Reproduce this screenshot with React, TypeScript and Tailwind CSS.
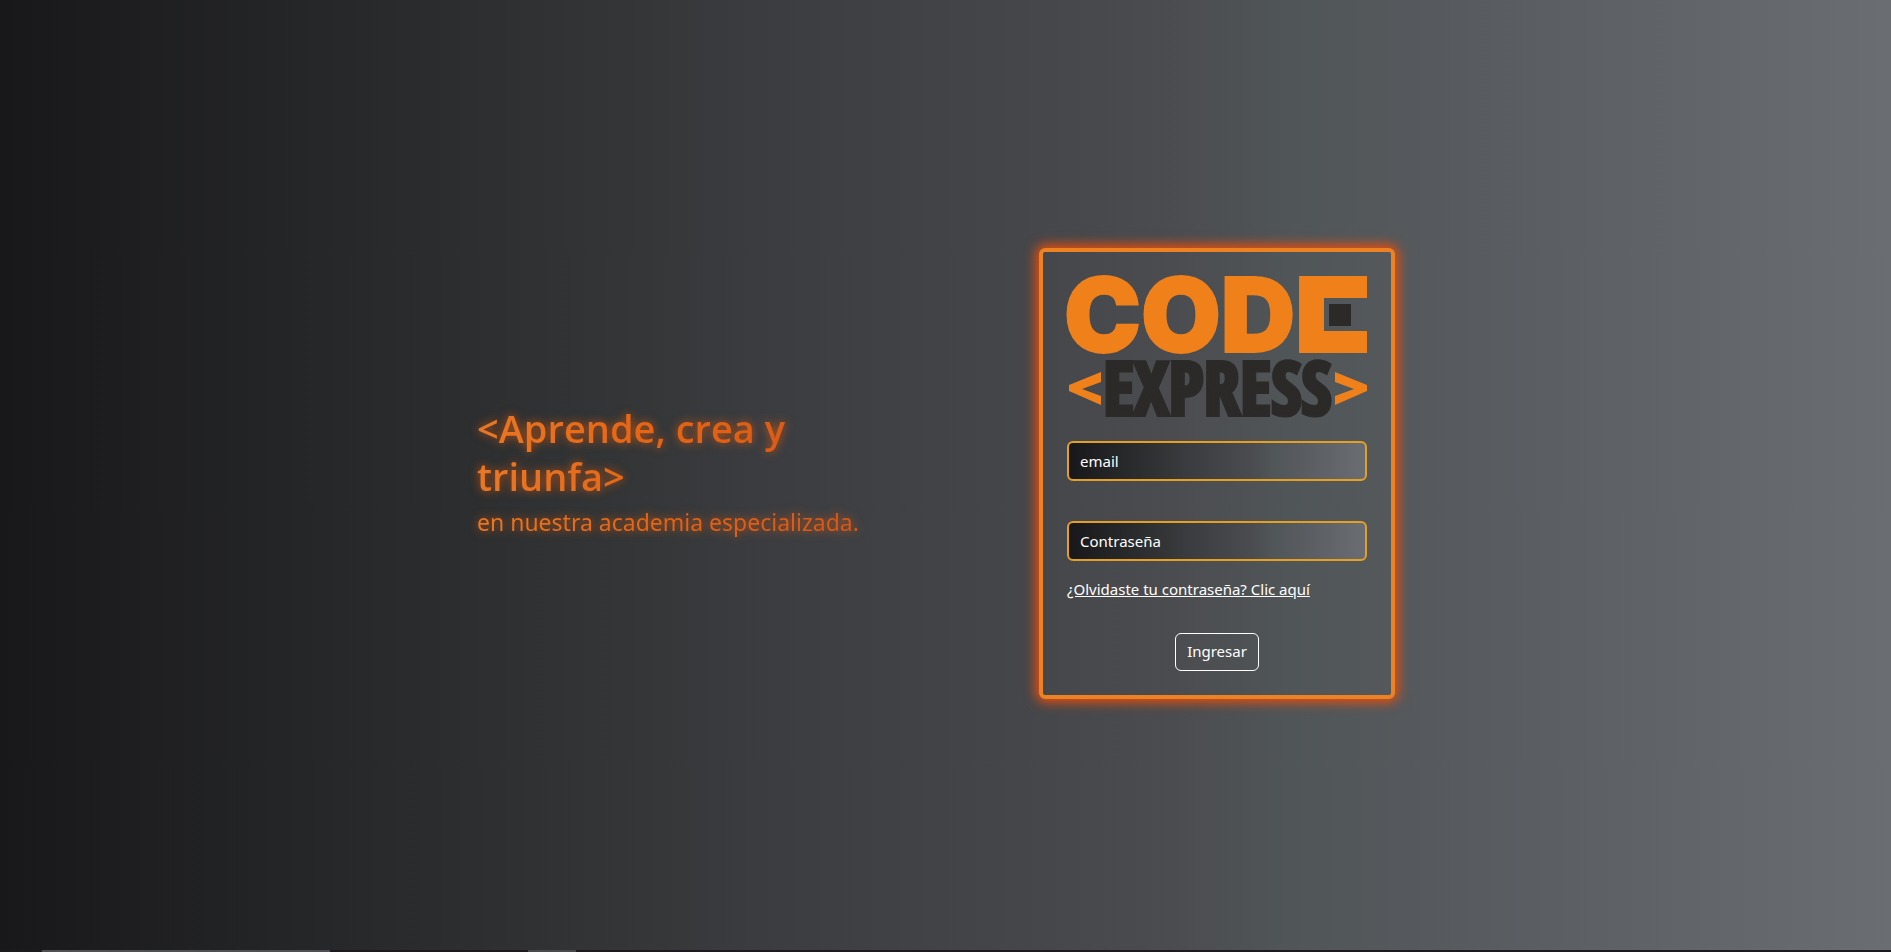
function Logo() {
  return (
    <svg viewBox="0 0 300 141" className="block w-full overflow-visible" role="img" aria-label="Code Express">
      <mask id="open-e" maskUnits="userSpaceOnUse" x="-10" y="-10" width="320" height="100">
        <rect x="-10" y="-10" width="320" height="100" fill="#fff" />
        <rect x="257" y="22" width="52" height="33" fill="#000" />
      </mask>
      <g fill="#f0801a" mask="url(#open-e)">
        <text
          x="-3"
          y="76"
          fontSize="103"
          fontFamily="Inter, sans-serif"
          fontWeight="900"
          stroke="#f0801a"
          strokeWidth="2"
        >
          CODE
        </text>
        <rect x="235" y="0" width="65" height="22" />
        <rect x="235" y="0" width="22" height="77" />
        <rect x="235" y="55" width="65" height="22" />
      </g>
      <rect x="262" y="28" width="22" height="22" fill="#2b2a29" />
      <text
        x="36"
        y="139"
        fontSize="73"
        fontWeight="700"
        fontFamily="'Open Sans Condensed', 'Roboto Condensed', sans-serif"
        fill="#2b2a29"
        stroke="#2b2a29"
        strokeWidth="4"
      >
        EXPRESS
      </text>
      <path d="M34 96 V106 L15 113 L34 120 V129 L2 115 V109 Z" fill="#f0801a" />
      <path d="M268 96 V106 L287 113 L268 120 V129 L300 115 V109 Z" fill="#f0801a" />
    </svg>
  );
}

const fieldClass =
  "block h-10 w-full rounded-md border-2 border-[#e5a023] bg-[linear-gradient(90deg,#18181a_0%,#343637_34%,#3b3c40_40%,#4b4c4f_62%,#505558_68%,#5b5e62_82%,#6a6d71_100%)] px-[11px] text-[15px] text-white outline-none placeholder:text-white";

export default function App() {
  return (
    <div className="flex min-h-screen flex-col bg-[linear-gradient(90deg,#18181a_0%,#343637_34%,#3b3c40_40%,#4b4c4f_62%,#505558_68%,#5b5e62_82%,#6a6d71_100%)] font-['Noto_Sans',sans-serif] text-white">
      <main className="flex flex-1 items-center justify-center px-4 pb-1">
        <div className="flex w-full max-w-[937px] flex-wrap items-center justify-between gap-10 pr-[19px]">
          <section className="w-full max-w-[400px] bg-linear-to-r from-[#e87826] from-0% via-[#e66614] via-40% to-[#d65518] bg-clip-text pb-1.5 text-transparent drop-shadow-[0_0_5px_rgba(255,98,0,0.7)]">
            <h1 className="mb-2 font-['Open_Sans','Noto_Sans',sans-serif] text-[38px] leading-12 font-semibold">
              &lt;Aprende, crea y triunfa&gt;
            </h1>
            <p className="text-[23px] leading-7">en nuestra academia especializada.</p>
          </section>

          <form
            className="w-full max-w-[356px] rounded-md border-4 border-[#ee8122] p-6 shadow-[0_0_12px_3px_#f04e0a]"
            onSubmit={(e) => e.preventDefault()}
          >
            <Logo />
            <input type="email" aria-label="email" placeholder="email" className={`${fieldClass} mt-6`} />
            <input
              type="password"
              aria-label="Contraseña"
              placeholder="Contraseña"
              className={`${fieldClass} mt-10`}
            />
            <a href="#recuperar" className="mt-4 inline-block text-[15px] leading-6 underline">
              ¿Olvidaste tu contraseña? Clic aquí
            </a>
            <div className="mt-8 flex justify-center">
              <button type="submit" className="h-[38px] rounded-md border border-white px-[11px] text-[15px]">
                Ingresar
              </button>
            </div>
          </form>
        </div>
      </main>
      <footer className="flex h-0.5 bg-[#1d1a1f]">
        <div className="ml-[42px] w-72 bg-[#505052]" />
        <div className="ml-[198px] w-12 bg-[#4a4a4c]" />
      </footer>
    </div>
  );
}
